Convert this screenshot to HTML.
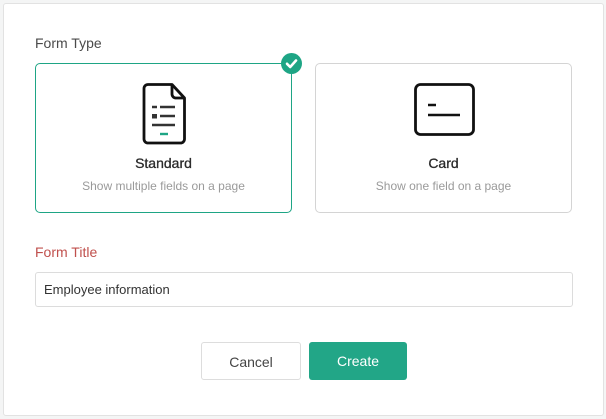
<!DOCTYPE html>
<html><head><meta charset="utf-8"><style>
html,body{margin:0;padding:0;}
body{width:606px;height:419px;background:#f4f5f5;font-family:"Liberation Sans",sans-serif;position:relative;overflow:hidden;}
.panel{position:absolute;left:3px;top:3px;width:599px;height:411px;background:#fff;border:1px solid #e2e2e2;border-radius:3px;}
.lbl{position:absolute;left:35px;font-size:14px;color:#4a4a4a;}
.card{position:absolute;top:63px;width:255px;height:148px;border:1px solid #d4d4d4;border-radius:5px;background:#fff;text-align:center;}
.card.sel{border-color:#1ea585;}
.card .t{position:absolute;top:91px;left:0;right:0;font-size:14px;color:#2a2a2a;-webkit-text-stroke:0.3px #2a2a2a;}
.card .s{position:absolute;top:115px;left:0;right:0;font-size:12px;color:#9a9a9a;}
.input{position:absolute;left:35px;top:272px;border:1px solid #dcdcdc;border-radius:3px;font-size:13px;color:#333;line-height:33px;padding-left:8px;box-sizing:border-box;width:538px;height:35px;}
.btn{position:absolute;top:342px;height:38px;border-radius:3px;font-size:14px;text-align:center;line-height:38px;box-sizing:border-box;}
</style></head><body>
<div class="panel"></div>
<div class="lbl" style="top:35px;">Form Type</div>
<div class="card sel" style="left:35px;">
<svg style="position:absolute;left:106px;top:19px" width="44" height="62" viewBox="0 0 44 62">
<path d="M6 1.5 H30 L42.5 15 V56 a4 4 0 0 1 -4 4 H6 a4 4 0 0 1 -4 -4 V5.5 a4 4 0 0 1 4 -4 Z" fill="none" stroke="#111" stroke-width="2.8" stroke-linejoin="round"/>
<path d="M30 1.5 V11 a4 4 0 0 0 4 4 H42.5" fill="none" stroke="#111" stroke-width="2.8"/>
<path d="M10 24 H15 M18 24 H33 M18 33 H33 M10 42 H33" stroke="#333" stroke-width="2.4"/>
<rect x="10" y="31" width="5" height="4.5" fill="#333"/>
<path d="M18 51 H26" stroke="#1ea585" stroke-width="2.4"/>
</svg>
<div class="t">Standard</div>
<div class="s">Show multiple fields on a page</div>
</div>
<svg style="position:absolute;left:281px;top:53px" width="21" height="21" viewBox="0 0 21 21"><circle cx="10.5" cy="10.5" r="10.5" fill="#1ea585"/><path d="M6 10.8 L9.2 14 L15 7.5" fill="none" stroke="#fff" stroke-width="2.6" stroke-linecap="round" stroke-linejoin="round"/></svg>
<div class="card" style="left:315px;">
<svg style="position:absolute;left:98px;top:19px" width="61" height="53" viewBox="0 0 61 53">
<rect x="1.5" y="1.5" width="58" height="50" rx="5" fill="none" stroke="#111" stroke-width="2.8"/>
<path d="M14 22 H22 M14 32 H46" stroke="#111" stroke-width="2.4"/>
</svg>
<div class="t">Card</div>
<div class="s">Show one field on a page</div>
</div>
<div class="lbl" style="top:244px;color:#c0504d;">Form Title</div>
<div class="input">Employee information</div>
<div class="btn" style="left:201px;width:100px;border:1px solid #ddd;color:#444;background:#fff;">Cancel</div>
<div class="btn" style="left:309px;width:98px;background:#22a687;color:#fff;">Create</div>
</body></html>
